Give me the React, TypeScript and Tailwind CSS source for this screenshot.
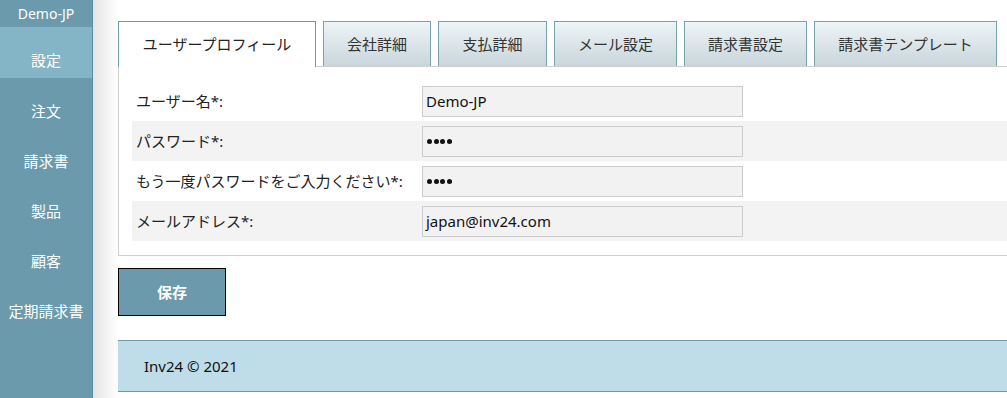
import React from 'react';

const font = { fontFamily: '"Noto Sans", "Noto Sans CJK JP", sans-serif' };

const menu = ['注文', '請求書', '製品', '顧客', '定期請求書'];
const tabs = [
  { name: 'ユーザープロフィール', w: 'w-[198px]' },
  { name: '会社詳細', w: 'w-[108px]' },
  { name: '支払詳細', w: 'w-[109px]' },
  { name: 'メール設定', w: 'w-[123px]' },
  { name: '請求書設定', w: 'w-[123px]' },
  { name: '請求書テンプレート', w: 'w-[183px]' },
];
const fields = [
  { label: 'ユーザー名*:', value: 'Demo-JP' },
  { label: 'パスワード*:', value: '', pw: true },
  { label: 'もう一度パスワードをご入力ください*:', value: '', pw: true },
  { label: 'メールアドレス*:', value: 'japan@inv24.com' },
];

const Dots = () => (
  <span className="flex gap-[1.5px] pl-[1px]">
    {[0, 1, 2, 3].map((d) => (
      <span key={d} className="h-[5px] w-[5px] rounded-full bg-[#111]" />
    ))}
  </span>
);

export default function App() {
  return (
    <div className="flex h-[398px] w-[1007px] overflow-hidden bg-white text-[#222]" style={font}>
      {/* Sidebar */}
      <aside className="flex w-[93px] shrink-0 flex-col border-r border-[#5c8b9b] bg-[#6a9aab] text-white">
        <div className="flex h-[27px] items-center justify-center text-[14px]">Demo-JP</div>
        <div className="flex h-[51px] justify-center bg-[#84b5c6] pt-[23px] text-[15px] leading-[20px]">設定</div>
        {menu.map((m) => (
          <div key={m} className="flex h-[50px] justify-center whitespace-nowrap pt-[23px] text-[15px] leading-[20px]">
            {m}
          </div>
        ))}
      </aside>
      <div className="w-[25px] shrink-0 bg-gradient-to-r from-[#e4e4e4] to-white" />

      {/* Main */}
      <main className="flex min-w-0 flex-1 flex-col pt-[21px]">
        <div className="flex gap-[7px]">
          {tabs.map((t, i) => (
            <div
              key={t.name}
              className={`${t.w} flex h-[45px] shrink-0 items-center justify-center whitespace-nowrap border border-b-0 text-[15px] ${
                i === 0
                  ? 'relative z-10 mb-[-1px] h-[46px] border-[#6e9aa6] bg-white'
                  : 'border-[#7aa2ad] bg-gradient-to-b from-[#eef4f7] to-[#c9d6dc] text-[#333]'
              }`}
            >
              {t.name}
            </div>
          ))}
        </div>
        <div className="w-[900px] border border-[#cfcfcf] py-[14px] pl-[13px]">
          {fields.map((f, i) => (
            <div
              key={f.label}
              className={`flex h-[40px] items-center pl-[4px] ${i % 2 === 1 ? 'bg-[#f3f3f3]' : ''}`}
            >
              <div className="w-[286px] whitespace-nowrap text-[15px] text-[#222]">{f.label}</div>
              <div className="flex h-[31px] w-[321px] items-center border border-[#cccccc] bg-[#f2f2f2] px-[3px] text-[15px] text-[#111]">
                {f.pw ? <Dots /> : f.value}
              </div>
            </div>
          ))}
        </div>
        <div className="pt-[12px]">
          <button className="flex h-[48px] w-[108px] items-center justify-center border border-black bg-[#6a9aab] text-[15px] font-bold text-white">
            保存
          </button>
        </div>
        <footer className="mt-[24px] flex h-[52px] w-[900px] items-center border-y border-[#6e9aa6] bg-[#bfdde8] pl-[26px] text-[15px] text-[#111]">
          Inv24 © 2021
        </footer>
      </main>
    </div>
  );
}
